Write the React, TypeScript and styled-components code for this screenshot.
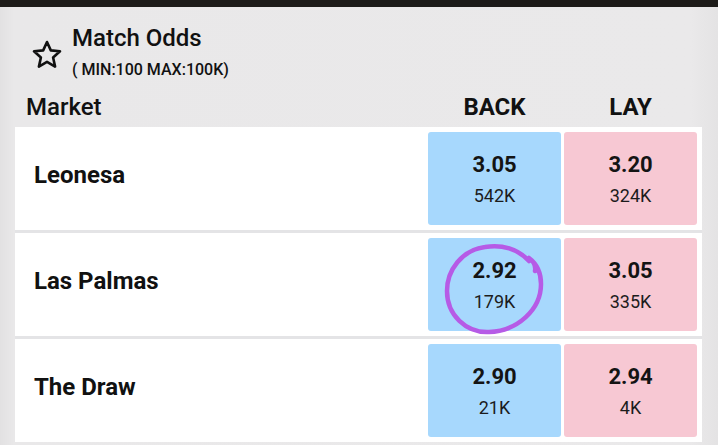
import React from "react";
import styled, { createGlobalStyle } from "styled-components";

const GlobalStyle = createGlobalStyle`
  html, body { margin: 0; padding: 0; }
  body {
    background: #e8e7e8;
    font-family: Roboto, "Liberation Sans", Arial, sans-serif;
    color: #111;
    width: 718px;
    height: 445px;
    overflow: hidden;
  }
`;

const Page = styled.div`
  width: 718px;
  height: 445px;
  display: flex;
  flex-direction: column;
  background: linear-gradient(90deg, #e2e1e2 0px, #e9e8e9 14px, #eae9ea 690px, #e4e3e4 718px);
`;

const TopBar = styled.div`
  height: 7px;
  background: #1d1b19;
  flex: none;
`;

const Header = styled.div`
  display: flex;
  align-items: flex-start;
  padding: 17px 0 0 31px;
  height: 56px;
`;

const StarWrap = styled.div`
  width: 32px;
  height: 30px;
  margin-top: 16px;
  margin-right: 9px;
  flex: none;
`;

const TitleBlock = styled.div`
  display: flex;
  flex-direction: column;
  gap: 8px;
`;

const Title = styled.div`
  font-size: 24px;
  line-height: 28px;
  font-weight: 500;
  color: #111;
`;

const Subtitle = styled.div`
  font-size: 16px;
  line-height: 20px;
  font-weight: 500;
  color: #111;
`;

const ColumnHeads = styled.div`
  display: grid;
  grid-template-columns: 1fr 133px 133px;
  column-gap: 3px;
  padding: 0 21px 0 26px;
  margin-top: 13px;
  height: 34px;
`;

const HeadCell = styled.div<{ $center?: boolean }>`
  font-size: 24px;
  line-height: 28px;
  font-weight: ${(p) => (p.$center ? 700 : 500)};
  text-align: ${(p) => (p.$center ? "center" : "left")};
  color: #111;
`;

const Panel = styled.div`
  margin: 0 16px 0 15px;
  display: flex;
  flex-direction: column;
  gap: 3px;
  background: #e4e4e6;
`;

const Row = styled.div`
  height: 103px;
  background: #fff;
  display: grid;
  grid-template-columns: 1fr 133px 133px;
  column-gap: 3px;
  padding: 5px 5px 5px 19px;
  box-sizing: border-box;
`;

const Name = styled.div`
  align-self: center;
  font-size: 24px;
  font-weight: 700;
  color: #111;
  padding-bottom: 7px;
`;

const OddsCell = styled.div<{ $side: "back" | "lay" }>`
  position: relative;
  background: ${(p) => (p.$side === "back" ? "#a7d8fd" : "#f7c8d3")};
  border-radius: 3px;
  display: flex;
  flex-direction: column;
  align-items: center;
  justify-content: center;
  gap: 7px;
  padding-top: 2px;
`;

const Price = styled.div`
  font-size: 22px;
  line-height: 26px;
  font-weight: 700;
  color: #141414;
`;

const Volume = styled.div`
  font-size: 18px;
  line-height: 22px;
  font-weight: 400;
  color: #1c1c1c;
`;

const Scribble = styled.svg`
  position: absolute;
  left: 0;
  top: 0;
  width: 133px;
  height: 93px;
  overflow: visible;
  pointer-events: none;
`;

const StarIcon = () => (
  <svg width="32" height="30" viewBox="0 0 32 30" fill="none">
    <path
      d="M16 2 L19.8 10.4 L29 11.3 L22.1 17.5 L24.1 26.6 L16 21.9 L7.9 26.6 L9.9 17.5 L3 11.3 L12.2 10.4 Z"
      stroke="#111"
      strokeWidth="2.6"
      strokeLinejoin="round"
    />
  </svg>
);

type Runner = {
  name: string;
  back: [string, string];
  lay: [string, string];
  marked?: boolean;
};

const runners: Runner[] = [
  { name: "Leonesa", back: ["3.05", "542K"], lay: ["3.20", "324K"] },
  { name: "Las Palmas", back: ["2.92", "179K"], lay: ["3.05", "335K"], marked: true },
  { name: "The Draw", back: ["2.90", "21K"], lay: ["2.94", "4K"] },
];

export default function App() {
  return (
    <>
      <GlobalStyle />
      <Page>
        <TopBar />
        <Header>
          <StarWrap>
            <StarIcon />
          </StarWrap>
          <TitleBlock>
            <Title>Match Odds</Title>
            <Subtitle>( MIN:100 MAX:100K)</Subtitle>
          </TitleBlock>
        </Header>
        <ColumnHeads>
          <HeadCell>Market</HeadCell>
          <HeadCell $center>BACK</HeadCell>
          <HeadCell $center>LAY</HeadCell>
        </ColumnHeads>
        <Panel>
          {runners.map((r) => (
            <Row key={r.name}>
              <Name>{r.name}</Name>
              <OddsCell $side="back">
                <Price>{r.back[0]}</Price>
                <Volume>{r.back[1]}</Volume>
                {r.marked && (
                  <Scribble viewBox="0 0 133 93">
                    <path
                      d="M101 23 C90 11 74 6 57 9 C34 12 19 32 19 53 C19 77 38 95 61 94 C89 93 113 72 113 46 C113 35 109 26 101 20 C105 23 108 28 107 33"
                      fill="none"
                      stroke="#b65be6"
                      strokeWidth="4.5"
                      strokeLinecap="round"
                      strokeLinejoin="round"
                    />
                  </Scribble>
                )}
              </OddsCell>
              <OddsCell $side="lay">
                <Price>{r.lay[0]}</Price>
                <Volume>{r.lay[1]}</Volume>
              </OddsCell>
            </Row>
          ))}
        </Panel>
      </Page>
    </>
  );
}
